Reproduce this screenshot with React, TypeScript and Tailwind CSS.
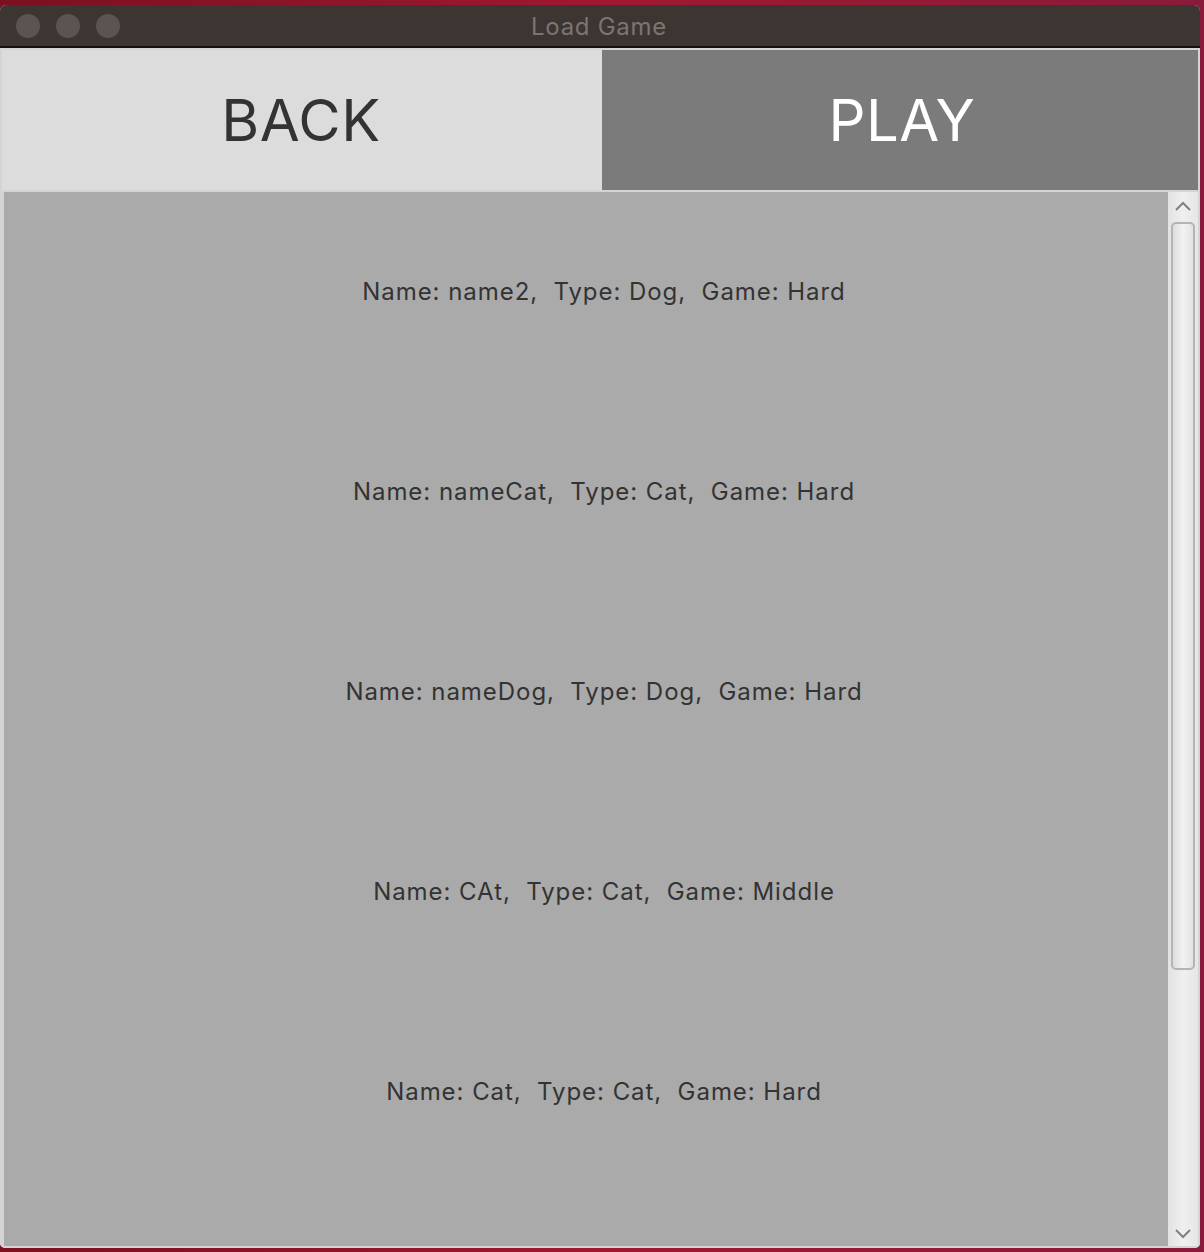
import React from "react";

const saves = [
  { name: "name2", type: "Dog", game: "Hard" },
  { name: "nameCat", type: "Cat", game: "Hard" },
  { name: "nameDog", type: "Dog", game: "Hard" },
  { name: "CAt", type: "Cat", game: "Middle" },
  { name: "Cat", type: "Cat", game: "Hard" },
];

const App: React.FC = () => {
  return (
    <div
      className="w-[1204px] h-[1252px] bg-gradient-to-r from-[#7a1020] via-[#a01830] to-[#8a1a3a] pt-[5px] pr-[4px] pb-[4px] overflow-hidden"
      style={{ fontFamily: "Inter, 'Noto Sans', sans-serif" }}
    >
      <div className="w-[1200px] h-[1243px] flex flex-col rounded-t-[6px] rounded-b-[5px] overflow-hidden bg-[#d6d6d6]">
        {/* title bar */}
        <div className="h-[41px] shrink-0 bg-[#3c3531] flex items-center relative">
          <div className="flex gap-[16px] pl-[16px] pt-[1px]">
            <span className="w-[24px] h-[24px] rounded-full bg-[#5b5451]" />
            <span className="w-[24px] h-[24px] rounded-full bg-[#5b5451]" />
            <span className="w-[24px] h-[24px] rounded-full bg-[#5b5451]" />
          </div>
          <div className="absolute inset-0 flex items-center justify-center pt-[2px] text-[24px] tracking-[0.7px] text-[#7b7572] pointer-events-none">
            <span className="mr-[2px]">Load Game</span>
          </div>
        </div>
        <div className="h-[2px] shrink-0 bg-[#141210]" />

        {/* buttons */}
        <div className="flex flex-col px-[2px] pt-[2px] pb-[2px] bg-[#d4d4d4] flex-1 min-h-0">
          <div className="flex h-[140px] shrink-0">
            <button className="w-[600px] h-full bg-[#dcdcdc] text-[#333333] text-[58px] tracking-[0.5px] flex items-center justify-center pr-[2px]">
              BACK
            </button>
            <button className="flex-1 h-full bg-[#7b7b7b] text-white text-[58px] tracking-[0.5px] flex items-center justify-center pl-[4px]">
              PLAY
            </button>
          </div>

          {/* list */}
          <div className="flex flex-1 min-h-0 mt-[2px] pl-[2px]">
            <div className="flex-1 bg-[#aaaaaa] flex flex-col pl-[36px]">
              {saves.map((s, i) => (
                <div
                  key={i}
                  className="h-[200px] shrink-0 flex items-center justify-center text-[24px] tracking-[0.95px] text-[#333333] whitespace-pre"
                >
                  {`Name: ${s.name},  Type: ${s.type},  Game: ${s.game}`}
                </div>
              ))}
            </div>

            {/* scrollbar */}
            <div className="w-[30px] bg-gradient-to-r from-[#e2e2e2] via-[#efefef] to-[#e6e6e6] flex flex-col items-center">
              <svg width="18" height="12" viewBox="0 0 18 12" className="mt-[8px]">
                <path d="M2 10 L9 3 L16 10" stroke="#808080" strokeWidth="2" fill="none" />
              </svg>
              <div className="mt-[10px] w-[24px] h-[748px] rounded-[5px] border-2 border-[#b4b4b4] bg-gradient-to-r from-[#dddddd] via-[#f2f2f2] to-[#e2e2e2]" />
              <div className="flex-1" />
              <svg width="18" height="12" viewBox="0 0 18 12" className="mb-[6px]">
                <path d="M2 2 L9 9 L16 2" stroke="#808080" strokeWidth="2" fill="none" />
              </svg>
            </div>
          </div>
        </div>
      </div>
    </div>
  );
};

export default App;
